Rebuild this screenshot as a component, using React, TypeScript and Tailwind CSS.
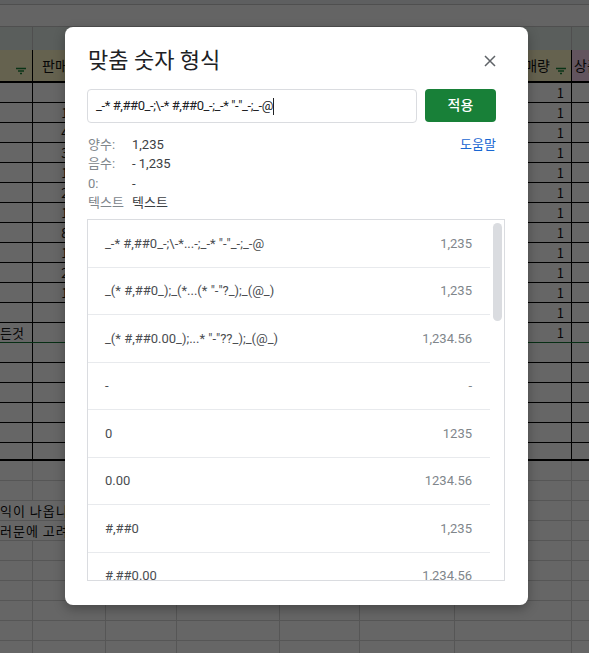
import React from "react";

const colW = [
  "w-[33px]",
  "w-[73px]",
  "w-[71px]",
  "w-[103px]",
  "w-[80px]",
  "w-[95px]",
  "w-[117px]",
  "w-[17px]",
];

const prices = [
  "",
  "15,000",
  "42,000",
  "38,000",
  "12,500",
  "27,000",
  "16,000",
  "85,000",
  "11,000",
  "24,000",
  "19,000",
  "",
  "",
];

const formats = [
  { code: '_-* #,##0_-;\\-*...-;_-* "-"_-;_-@', sample: "1,235" },
  { code: '_(* #,##0_);_(*...(* "-"?_);_(@_)', sample: "1,235" },
  { code: '_(* #,##0.00_);...* "-"??_);_(@_)', sample: "1,234.56" },
  { code: "-", sample: "-" },
  { code: "0", sample: "1235" },
  { code: "0.00", sample: "1234.56" },
  { code: "#,##0", sample: "1,235" },
  { code: "#,##0.00", sample: "1,234.56" },
];

const FilterIcon = () => (
  <svg width="12" height="8" viewBox="0 0 12 8" className="shrink-0 self-end mb-[6px]">
    <path d="M1 1.5h10M3 4h6M5 6.5h2" stroke="#188038" strokeWidth="1.3" />
  </svg>
);

const Sheet = () => {
  return (
    <div className="flex flex-col text-[13px] text-[#111] font-[family-name:'Noto_Sans_CJK_KR',sans-serif]">
      <div className="h-[5px] bg-[#eceef1] border-b border-[#c6c6c6]" />
      <div className="h-[22px] bg-[#fafafa] border-b border-[#c6c6c6]" />
      <div className="flex h-[23px] bg-[#e2ece6]">
        {colW.map((w, i) => (
          <div
            key={i}
            className={`${w} shrink-0 ${i < 7 ? "border-r border-[#c6c6c6]" : ""}`}
          />
        ))}
      </div>

      {/* header row */}
      <div className="flex h-[33px] border-b-2 border-black">
        <div className={`${colW[0]} shrink-0 bg-[#fdf5c6] border-r border-black flex justify-end pr-[5px]`}>
          <FilterIcon />
        </div>
        <div className={`${colW[1]} shrink-0 bg-[#fdf5c6] border-r border-black flex items-center pl-[9px] whitespace-nowrap overflow-hidden text-[14px]`}>
          판매가
        </div>
        {[2, 3, 4, 5].map((i) => (
          <div key={i} className={`${colW[i]} shrink-0 bg-[#fdf5c6] border-r border-black`} />
        ))}
        <div className={`${colW[6]} shrink-0 bg-[#fdf5c6] border-r border-black flex items-center justify-end gap-[5px] pr-[4px] text-[14px]`}>
          판매량
          <FilterIcon />
        </div>
        <div className={`${colW[7]} shrink-0 bg-[#f4d2ea] flex items-center pl-[2px] whitespace-nowrap overflow-hidden text-[14px]`}>
          상품
        </div>
      </div>

      {/* data rows */}
      {prices.map((p, r) => (
        <div
          key={r}
          className={`flex h-[20px] border-b ${r === 12 ? "border-[#137333]" : "border-black"}`}
        >
          <div className={`${colW[0]} shrink-0 border-r border-black whitespace-nowrap leading-[19px]`}>
            {r === 12 ? "든것" : ""}
          </div>
          <div className={`${colW[1]} shrink-0 border-r border-black text-right pr-[4px] leading-[19px]`}>
            {p}
          </div>
          {[2, 3, 4, 5].map((i) => (
            <div key={i} className={`${colW[i]} shrink-0 border-r border-black`} />
          ))}
          <div className={`${colW[6]} shrink-0 border-r border-black text-right pr-[7px] leading-[19px]`}>
            1
          </div>
          <div className={`${colW[7]} shrink-0`} />
        </div>
      ))}

      {/* empty bordered rows */}
      {["h-[20px]", "h-[20px]", "h-[20px]", "h-[20px]", "h-[20px]", "h-[18px]"].map((h, r) => (
        <div
          key={r}
          className={`flex ${h} ${r === 5 ? "border-b-2" : "border-b"} border-black`}
        >
          {colW.map((w, i) => (
            <div
              key={i}
              className={`${w} shrink-0 ${i < 7 ? "border-r border-black" : ""}`}
            />
          ))}
        </div>
      ))}

      {/* plain grid */}
      {Array.from({ length: 10 }).map((_, r) =>
        r === 2 || r === 3 ? (
          <div key={r} className="flex h-[20px] border-b border-[#d6d6d6]">
            <div className="w-[572px] shrink-0 border-r border-[#d6d6d6] whitespace-nowrap leading-[19px] tracking-[1px]">
              {r === 2 ? "익이 나옵니다" : "러문에 고려하여"}
            </div>
            <div className={`${colW[7]} shrink-0`} />
          </div>
        ) : (
          <div key={r} className="flex h-[20px] border-b border-[#d6d6d6]">
            {colW.map((w, i) => (
              <div
                key={i}
                className={`${w} shrink-0 ${i < 7 ? "border-r border-[#d6d6d6]" : ""}`}
              />
            ))}
          </div>
        )
      )}
    </div>
  );
};

const CustomNumberFormatDialog = () => {
  return (
    <div className="absolute left-[65px] top-[27px] w-[463px] h-[578px] rounded-[8px] bg-white shadow-[0_4px_12px_rgba(0,0,0,0.3)] pl-[22px] pr-[23px] pt-[20px] flex flex-col font-[family-name:Roboto,'Noto_Sans_CJK_KR',sans-serif]">
      <div className="flex items-center justify-between pr-[9px] h-[28px]">
        <h2 className="text-[22px] leading-[28px] text-[#202124] pl-[1px]">맞춤 숫자 형식</h2>
        <svg width="12" height="12" viewBox="0 0 12 12">
          <path d="M1 1l10 10M11 1L1 11" stroke="#5f6368" strokeWidth="1.5" />
        </svg>
      </div>

      <div className="mt-[14px] flex gap-[8px] pr-[9px]">
        <div className="flex-1 h-[34px] border border-[#dadce0] rounded-[4px] flex items-center pl-[8px] text-[13px] tracking-[-0.4px] text-[#202124]">
          <span>_-* #,##0_-;\-* #,##0_-;_-* "-"_-;_-@</span>
          <span className="w-px h-[17px] bg-[#202124]" />
        </div>
        <button className="w-[71px] h-[33px] rounded-[4px] bg-[#188038] text-white text-[14px] font-medium">
          적용
        </button>
      </div>

      <div className="mt-[12px] flex justify-between pr-[9px] text-[13px] leading-[19.3px]">
        <div className="grid grid-cols-[44px_auto] pl-[1px]">
          <span className="text-[#80868b]">양수:</span>
          <span className="text-[#3c4043]">1,235</span>
          <span className="text-[#80868b]">음수:</span>
          <span className="text-[#3c4043]">- 1,235</span>
          <span className="text-[#80868b]">0:</span>
          <span className="text-[#3c4043]">-</span>
          <span className="text-[#80868b]">텍스트</span>
          <span className="text-[#3c4043]">텍스트</span>
        </div>
        <span className="text-[#1967d2] text-[13px]">도움말</span>
      </div>

      <div className="mt-[7px] h-[362px] border border-[#dadce0] flex overflow-hidden">
        <div className="flex-1 flex flex-col">
          {formats.map((f) => (
            <div
              key={f.code}
              className="h-[47.5px] shrink-0 border-b border-[#e8eaed] flex items-center justify-between pl-[17px] pr-[18px] text-[13px]"
            >
              <span className="text-[#4a4d51]">{f.code}</span>
              <span className="text-[#80868b]">{f.sample}</span>
            </div>
          ))}
        </div>
        <div className="w-[14px] shrink-0 pl-[3px] pt-[3px]">
          <div className="w-[9px] h-[98px] rounded-full bg-[#dadce0]" />
        </div>
      </div>
    </div>
  );
};

const App = () => {
  return (
    <div className="relative w-[589px] h-[653px] overflow-hidden bg-white">
      <Sheet />
      <div className="absolute inset-0 bg-black/60" />
      <CustomNumberFormatDialog />
    </div>
  );
};

export default App;
